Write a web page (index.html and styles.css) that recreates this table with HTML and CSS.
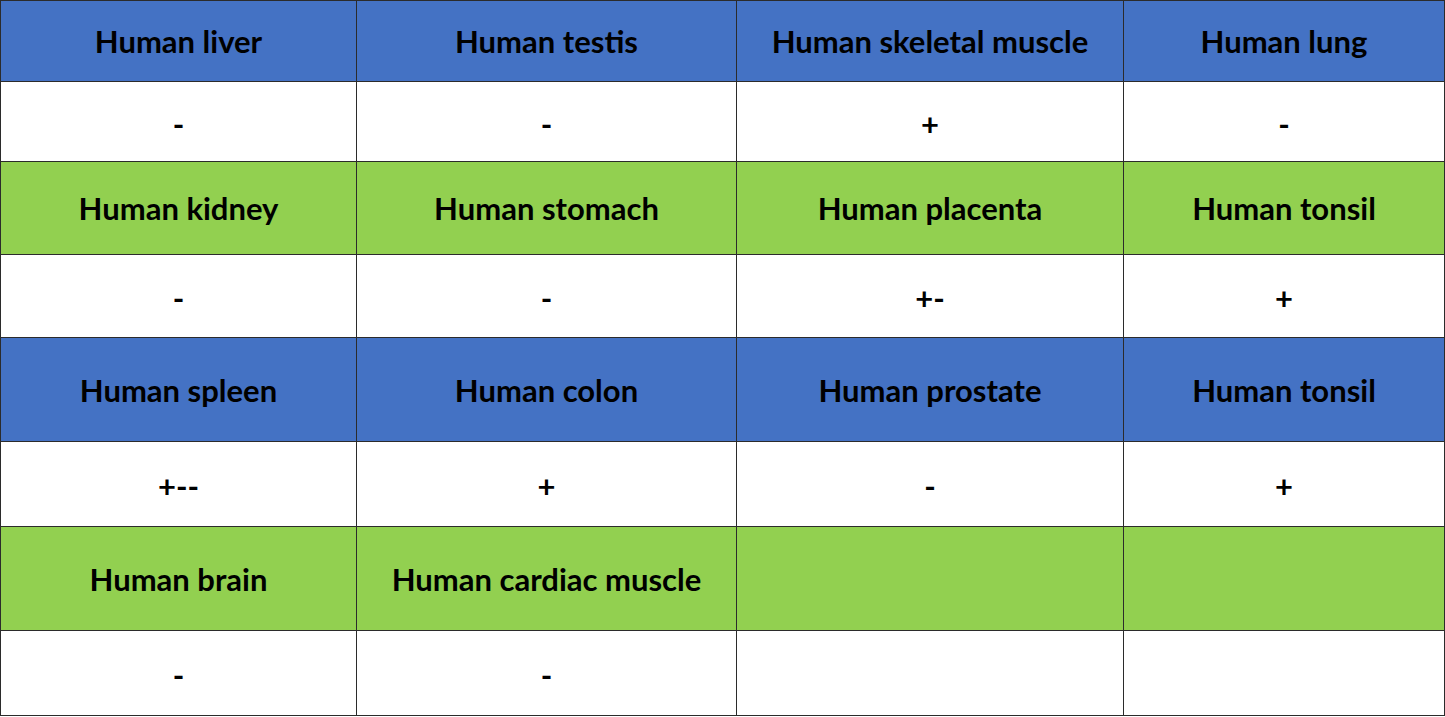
FILE: index.html
```html
<!DOCTYPE html>
<html>
<head>
<meta charset="utf-8">
<link rel="stylesheet" href="styles.css">
</head>
<body>
<div class="table">
  <div class="cell blue">Human liver</div>
  <div class="cell blue">Human testis</div>
  <div class="cell blue">Human skeletal muscle</div>
  <div class="cell blue">Human lung</div>
  <div class="cell sign">-</div>
  <div class="cell sign">-</div>
  <div class="cell sign">+</div>
  <div class="cell sign">-</div>
  <div class="cell green">Human kidney</div>
  <div class="cell green">Human stomach</div>
  <div class="cell green">Human placenta</div>
  <div class="cell green">Human tonsil</div>
  <div class="cell sign">-</div>
  <div class="cell sign">-</div>
  <div class="cell sign">+-</div>
  <div class="cell sign">+</div>
  <div class="cell blue">Human spleen</div>
  <div class="cell blue">Human colon</div>
  <div class="cell blue">Human prostate</div>
  <div class="cell blue">Human tonsil</div>
  <div class="cell sign">+--</div>
  <div class="cell sign">+</div>
  <div class="cell sign">-</div>
  <div class="cell sign">+</div>
  <div class="cell green">Human brain</div>
  <div class="cell green">Human cardiac muscle</div>
  <div class="cell green"></div>
  <div class="cell green"></div>
  <div class="cell sign">-</div>
  <div class="cell sign">-</div>
  <div class="cell sign"></div>
  <div class="cell sign"></div>
</div>
</body>
</html>
```
FILE: styles.css
```css
html, body {
  margin: 0;
  padding: 0;
  background: #ffffff;
}
.table {
  display: grid;
  grid-template-columns: 355px 379px 386px 320px;
  grid-template-rows: 80px 79px 92px 82px 103px 84px 103px 84px;
  gap: 1px;
  padding: 1px;
  width: max-content;
  background: #2b2b2b;
  font-family: "Lato", "Open Sans", sans-serif;
  font-weight: 700;
  font-size: 31px;
  color: #000;
}
.cell {
  background: #ffffff;
  display: flex;
  align-items: center;
  justify-content: center;
  white-space: nowrap;
}
.sign {
  padding-top: 4px;
}
.blue {
  background: #4472c4;
}
.green {
  background: #92d050;
}
```
